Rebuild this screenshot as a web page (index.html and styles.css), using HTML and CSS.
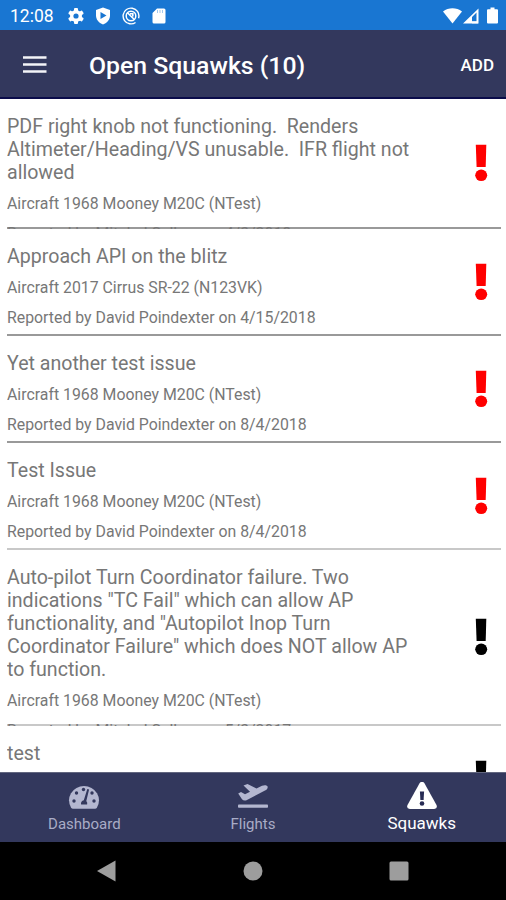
FILE: index.html
```html
<!DOCTYPE html>
<html lang="en">
<head>
<meta charset="utf-8">
<title>Open Squawks</title>
<link rel="stylesheet" href="styles.css">
</head>
<body>
<svg class="defs" width="0" height="0">
  <symbol id="bang" viewBox="0 0 14 38"><path d="M1.800.8h10.500L11.700 23H2.600z"/><ellipse cx="7.200" cy="31.300" rx="6" ry="5.800"/></symbol>
</svg>
<div class="status">
  <span class="clock">12:08</span>
  <svg class="s-gear" width="16" height="16" viewBox="0 0 16 16"><g fill="#fff"><rect x="6" y="0" width="4" height="16" rx="1"/><rect x="6" y="0" width="4" height="16" rx="1" transform="rotate(60 8 8)"/><rect x="6" y="0" width="4" height="16" rx="1" transform="rotate(120 8 8)"/><circle cx="8" cy="8" r="6"/></g><circle cx="8" cy="8" r="2.600" fill="#1976d2"/></svg>
  <svg class="s-shield" width="16" height="18" viewBox="0 0 16 18"><path fill="#fff" d="M8 .5 15 3v5.500c0 4-2.700 7.300-7 9-4.300-1.700-7-5-7-9V3z"/><path fill="#1976d2" d="M5.500 5v7l6-3.500z"/></svg>
  <svg class="s-at" width="18" height="18" viewBox="0 0 18 18" fill="none" stroke="#fff"><circle cx="9" cy="9" r="7.900" stroke-width="1.400" stroke-dasharray="44 5.600" transform="rotate(55 9 9)"/><circle cx="9" cy="9" r="4.800" stroke-width="1.500"/><path stroke-width="1.600" d="m5.500 5.700 6.800 6.800M8 6.800h2.800v2.800"/></svg>
  <svg class="s-sd" width="14" height="16" viewBox="0 0 14 16"><path fill="#fff" d="M5 .5h7A1.500 1.500 0 0 1 13.500 2v12a1.500 1.500 0 0 1-1.500 1.500H2A1.500 1.500 0 0 1 .5 14V5z"/><path stroke="#1976d2" stroke-opacity=".4" d="M5.500 2v3M8 2v3M10.500 2v3"/></svg>
  <span class="spacer"></span>
  <svg width="19" height="16" viewBox="0 0 19 16"><path fill="#fff" d="M0 3.500C5.500-.9 13.500-.9 19 3.500L9.500 15.500z"/></svg>
  <svg class="s-cell" width="16" height="16" viewBox="0 0 16 16"><path fill="#fff" fill-rule="evenodd" d="M15.500.5v15H0zM13.500 4.500 9 9v4.500h4.500z"/><path fill="#fff" opacity=".7" d="M9 13h6v2.500H9z"/></svg>
  <svg class="s-batt" width="11" height="17" viewBox="0 0 11 17"><path fill="#fff" d="M3.500.5h4v1.700H10q1 0 1 1V15.500q0 1-1 1H1q-1 0-1-1V3.200q0-1 1-1h2.500z"/></svg>
</div>
<header class="bar">
  <svg width="24" height="18" viewBox="0 0 24 18"><path stroke="#f4f4f8" stroke-width="2.600" d="M0 1.500h23.500M0 8.500h23.500M0 15.500h23.500"/></svg>
  <h1>Open Squawks (10)</h1>
  <span class="add">ADD</span>
</header>
<main class="list">
  <section class="item tall3">
    <div class="text"><h2>PDF right knob not functioning.&nbsp; Renders<br>Altimeter/Heading/VS unusable.&nbsp; IFR flight not<br>allowed</h2><p>Aircraft 1968 Mooney M20C (NTest)</p><p>Reported by Mitchel Sellers on 4/3/2018</p></div>
    <svg class="bang red"><use href="#bang"/></svg>
  </section>
  <section class="item">
    <div class="text"><h2>Approach API on the blitz</h2><p>Aircraft 2017 Cirrus SR-22 (N123VK)</p><p>Reported by David Poindexter on 4/15/2018</p></div>
    <svg class="bang red"><use href="#bang"/></svg>
  </section>
  <section class="item">
    <div class="text"><h2>Yet another test issue</h2><p>Aircraft 1968 Mooney M20C (NTest)</p><p>Reported by David Poindexter on 8/4/2018</p></div>
    <svg class="bang red"><use href="#bang"/></svg>
  </section>
  <section class="item light">
    <div class="text"><h2>Test Issue</h2><p>Aircraft 1968 Mooney M20C (NTest)</p><p>Reported by David Poindexter on 8/4/2018</p></div>
    <svg class="bang red"><use href="#bang"/></svg>
  </section>
  <section class="item tall5 light">
    <div class="text"><h2>Auto-pilot Turn Coordinator failure. Two<br>indications "TC Fail" which can allow AP<br>functionality, and "Autopilot Inop Turn<br>Coordinator Failure" which does NOT allow AP<br>to function.</h2><p>Aircraft 1968 Mooney M20C (NTest)</p><p>Reported by Mitchel Sellers on 5/3/2017</p></div>
    <svg class="bang"><use href="#bang"/></svg>
  </section>
  <section class="item">
    <div class="text"><h2>test</h2></div>
    <svg class="bang"><use href="#bang"/></svg>
  </section>
</main>
<nav class="tabs">
  <div class="tab">
    <svg width="32" height="28" viewBox="0 0 32 28"><path fill="#b4b7d0" d="M3 25.500A15 14.300 0 1 1 29 25.500q-.8 1.300-2 1.300H5q-1.200 0-2-1.300z"/><g fill="#33385d"><circle cx="6" cy="19" r="1.700"/><circle cx="8.500" cy="11" r="1.700"/><circle cx="15.500" cy="7.500" r="1.700"/><circle cx="24" cy="11" r="1.700"/><circle cx="26" cy="19" r="1.700"/><path d="M19.300 7l1.800.6-2.800 11.400a3.400 3.400 0 0 1 .8 3.500h-6a3.400 3.400 0 0 1 2.700-4.300z"/></g></svg>
    <span>Dashboard</span>
  </div>
  <div class="tab">
    <svg width="32" height="28" viewBox="0 0 32 28"><g fill="#b4b7d0"><rect x="1" y="22.500" width="30" height="3.200" rx=".8"/><path d="M1.200 11.500 4 10l4 2.300 5-2.500L6.500 3.500 10.500 2l9 4.500 5.500-2.700c2-.9 4.500-1 5.500.5.700 1.500-.6 3.300-2.500 4.300L9.500 18.300q-3 .7-4.500-1z"/></g></svg>
    <span>Flights</span>
  </div>
  <div class="tab active">
    <svg width="32" height="28" viewBox="0 0 32 28"><path fill="#fff" d="M13.700 1q2.300-2.800 4.600 0L30.500 23q1.300 3.500-2.300 4H3.800q-3.600-.5-2.300-4z"/><path fill="#272b54" d="M13.900 9.500h4.200l-.5 8.500h-3.200z"/><circle cx="16" cy="21.500" r="2.300" fill="#272b54"/></svg>
    <span>Squawks</span>
  </div>
</nav>
<footer class="keys">
  <svg width="19" height="22" viewBox="0 0 19 22"><path fill="#9d9d9d" d="M0 11 18.500.5v21z"/></svg>
  <svg width="20" height="20" viewBox="0 0 20 20"><circle cx="10" cy="10" r="9.500" fill="#9d9d9d"/></svg>
  <svg width="20" height="20" viewBox="0 0 20 20"><rect x=".5" y=".5" width="19" height="19" rx="1.500" fill="#9d9d9d"/></svg>
</footer>
</body>
</html>
```

FILE: styles.css
```css
* { box-sizing: border-box; }
body { margin: 0; width: 506px; height: 900px; overflow: hidden; background: #fff; font-family: Roboto, sans-serif; display: flex; flex-direction: column; }
.defs { position: absolute; }
svg { display: block; flex: none; }
.status { height: 30px; flex: none; background: #1976d2; display: flex; align-items: center; padding: 1px 8px 0 10px; }
.clock { color: #fff; font-size: 17.5px; width: 58px; }
.s-shield { margin-left: 11px; }
.s-at { margin-left: 11px; }
.s-sd { margin-left: 12px; }
.spacer { flex: 1; }
.s-cell { margin-left: 1px; }
.s-batt { margin-left: 8px; }
.bar { height: 69px; flex: none; background: #33385d; border-bottom: 2px solid #0b0c4a; color: #fff; display: flex; align-items: center; padding: 3px 12px 0 23px; }
.bar h1 { margin: 1px 0 0 42px; flex: 1; font-size: 24.8px; font-weight: 500; line-height: 30px; white-space: nowrap; }
.add { font-size: 17px; font-weight: 500; }
.list { height: 673px; flex: none; overflow: hidden; padding: 0 5px 0 7px; }
.item { height: 107px; background: linear-gradient(#999, #999) bottom / 100% 2px no-repeat; display: flex; align-items: center; justify-content: space-between; padding: 0 13px 2px 0; overflow: hidden; }
.item.light { background-image: linear-gradient(#c8c8c8, #c8c8c8); }
.tall3 { height: 130px; }
.tall5 { height: 176px; }
.text { align-self: flex-start; padding-top: 16px; color: #777; }
.text h2 { margin: 0 0 5px; font-size: 19.6px; font-weight: 400; line-height: 23px; white-space: nowrap; }
.text p { margin: 0; font-size: 15.85px; line-height: 30px; white-space: nowrap; }
.bang { width: 14px; height: 38px; fill: #000; }
.bang.red { fill: #f00; }
.tabs { height: 70px; flex: none; background: #33385d; border-top: 1px solid #62667f; display: grid; grid-template-columns: repeat(3, 1fr); }
.tab { display: flex; flex-direction: column; align-items: center; padding-top: 9px; color: #a9acc6; font-size: 15px; }
.tab span { line-height: 20px; margin-top: 4px; }
.tab.active { color: #fff; font-size: 17px; }
.tab.active span { margin-top: 3px; }
.keys { flex: 1; background: #000; display: flex; align-items: center; justify-content: space-between; padding: 0 97px; }
```
